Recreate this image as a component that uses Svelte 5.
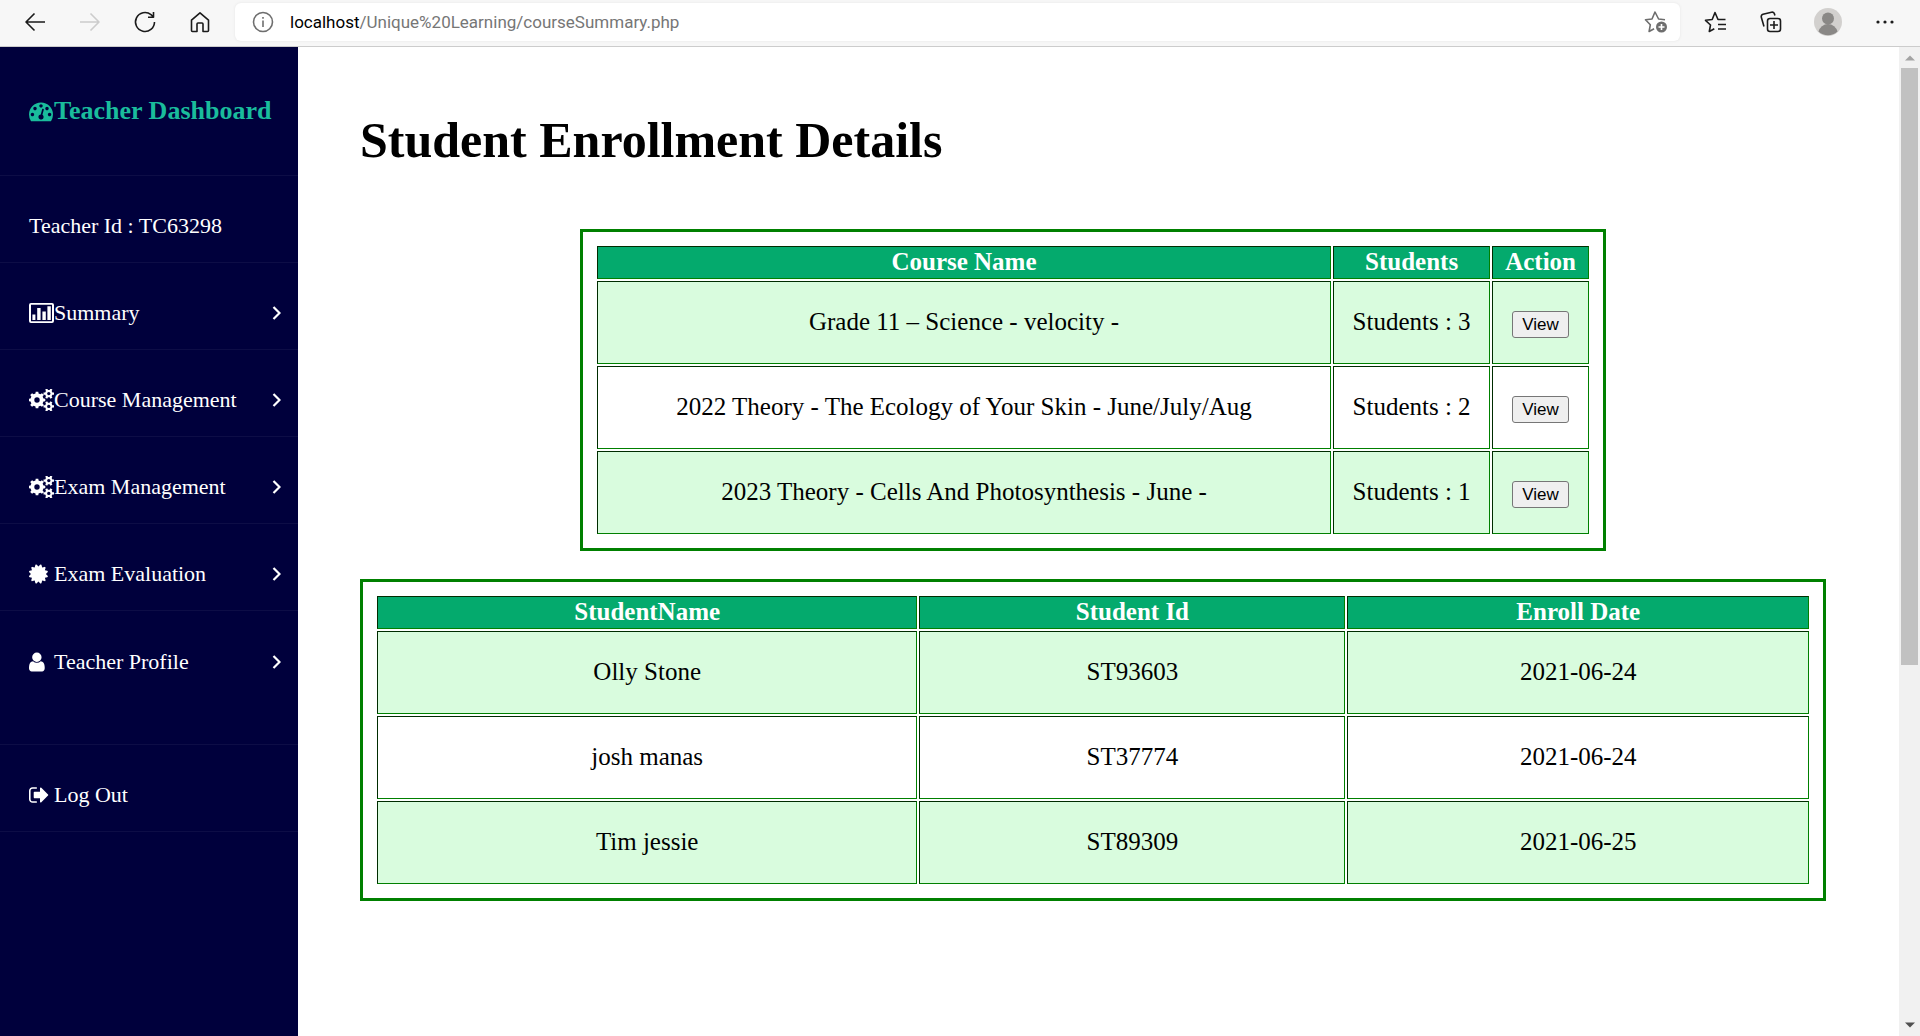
<script>
  // Outline of a toothed wheel with a round hole, centred on (cx, cy).
  function gear(cx, cy, outer, inner, hole, teeth) {
    const step = (Math.PI * 2) / teeth;
    const at = (r, a) => `${(cx + r * Math.cos(a)).toFixed(2)} ${(cy + r * Math.sin(a)).toFixed(2)}`;
    const points = [];
    for (let i = 0; i < teeth; i++) {
      const a = i * step;
      points.push(at(inner, a - step * 0.3), at(outer, a - step * 0.2), at(outer, a + step * 0.2), at(inner, a + step * 0.3));
    }
    return `M${points.join('L')}ZM${cx - hole} ${cy}a${hole} ${hole} 0 1 0 ${hole * 2} 0a${hole} ${hole} 0 1 0 ${-hole * 2} 0Z`;
  }

  const cogs = {
    box: '0 0 25 22',
    path: gear(8, 11, 8.4, 6.6, 2.7, 8) + gear(19.8, 4.6, 5.4, 3.8, 1.7, 6) + gear(19.8, 17.4, 5.4, 3.8, 1.7, 6)
  };

  const icons = {
    chart: {
      box: '0 0 25 22',
      path: 'M2 1h21a2 2 0 0 1 2 2v16a2 2 0 0 1-2 2H2a2 2 0 0 1-2-2V3a2 2 0 0 1 2-2ZM2 2.8v16.4h21V2.800ZM3.400 12.400h3v5.600h-3ZM8.200 6h3.400v12h-3.400ZM13.400 9.400h3.400v8.600h-3.400ZM18.400 4.200h3.400v13.800h-3.400Z'
    },
    cogs,
    certificate: {
      box: '128 0 2036 1792',
      path: 'M1504 896l138 135q30 28 20 70-12 41-52 51l-188 48 53 186q12 41-19 70-29 31-70 19l-186-53-48 188q-10 40-51 52-12 2-19 2-31 0-51-22l-135-138-135 138q-28 30-70 20-41-11-51-52l-48-188-186 53q-41 12-70-19-31-29-19-70l53-186-188-48q-40-10-52-51-10-42 20-70l138-135-138-135q-30-28-20-70 12-41 52-51l188-48-53-186q-12-41 19-70 29-31 70-19l186 53 48-188q10-41 51-51 41-12 70 19l135 139 135-139q29-30 70-19 41 10 51 51l48 188 186-53q41-12 70 19 31 29 19 70l-53 186 188 48q40 10 52 51 10 42-20 70z'
    },
    user: {
      box: '256 0 2036 1792',
      path: 'M1536 1399q0 109-62.5 187t-150.5 78h-854q-88 0-150.5-78t-62.5-187q0-85 8.5-160.5t31.5-152 58.5-131 94-89 134.5-34.5q131 128 313 128t313-128q76 0 134.5 34.5t94 89 58.5 131 31.5 152 8.5 160.5zm-256-887q0 159-112.5 271.5t-271.5 112.5-271.5-112.5-112.5-271.5 112.5-271.5 271.5-112.5 271.5 112.5 112.5 271.5z'
    },
    signout: {
      box: '64 0 2036 1792',
      path: 'M704 1440q0 4 1 20t.5 26.5-3 23.5-10 19.5-20.5 6.5h-320q-119 0-203.5-84.5t-84.5-203.5v-704q0-119 84.5-203.5t203.5-84.5h320q13 0 22.5 9.5t9.5 22.5q0 4 1 20t.5 26.5-3 23.5-10 19.5-20.5 6.5h-320q-66 0-113 47t-47 113v704q0 66 47 113t113 47h312l11.5 1 11.5 3 8 5.5 7 9 2 13.5zm928-544q0 26-19 45l-544 544q-19 19-45 19t-45-19-19-45v-288h-448q-26 0-45-19t-19-45v-384q0-26 19-45t45-19h448v-288q0-26 19-45t45-19 45 19l544 544q19 19 19 45z'
    }
  };

  const menu = [
    { label: 'Summary', icon: 'chart', more: true },
    { label: 'Course Management', icon: 'cogs', more: true },
    { label: 'Exam Management', icon: 'cogs', more: true },
    { label: 'Exam Evaluation', icon: 'certificate', more: true },
    { label: 'Teacher Profile', icon: 'user', more: true, last: true },
    { label: 'Log Out', icon: 'signout', more: false }
  ];

  const courses = [
    { name: 'Grade 11 – Science - velocity -', students: 3 },
    { name: '2022 Theory - The Ecology of Your Skin - June/July/Aug', students: 2 },
    { name: '2023 Theory - Cells And Photosynthesis - June -', students: 1 }
  ];

  const students = [
    { name: 'Olly Stone', id: 'ST93603', date: '2021-06-24' },
    { name: 'josh manas', id: 'ST37774', date: '2021-06-24' },
    { name: 'Tim jessie', id: 'ST89309', date: '2021-06-25' }
  ];
</script>

<div class="window">
  <header class="toolbar">
    <div class="nav-buttons">
      <button aria-label="Back"><svg viewBox="0 0 24 24"><path d="M22 12H3M11.500 3.500 3 12l8.500 8.500" /></svg></button>
      <button aria-label="Forward" class="off" disabled><svg viewBox="0 0 24 24"><path d="M2 12h19M12.500 3.500 21 12l-8.500 8.500" /></svg></button>
      <button aria-label="Refresh"><svg viewBox="0 0 24 24"><path d="M21.500 12a9.500 9.500 0 1 1-3.500-7.400L20.500 7M20.500 2v5.300h-5.500" /></svg></button>
      <button aria-label="Home"><svg viewBox="0 0 24 24"><path d="M3.500 10.200 12 2.800l8.500 7.400V20.500a1 1 0 0 1-1 1h-4.500V14a1 1 0 0 0-1-1h-4a1 1 0 0 0-1 1v7.500H4.500a1 1 0 0 1-1-1Z" /></svg></button>
    </div>
    <div class="address">
      <button aria-label="Site information" class="grey"><svg viewBox="0 0 24 24"><circle cx="12" cy="12" r="9.500" /><path d="M12 10.500v6.500M12 7v1.800" /></svg></button>
      <div class="url"><span>localhost</span>/Unique%20Learning/courseSummary.php</div>
      <button aria-label="Add to favorites" class="grey">
        <svg viewBox="0 0 24 24"><path d="M21 9.800 14.600 9 11 2 8 9 1.500 9.800l4.800 5-1.200 6.700 5-2.700" /><circle class="solid" cx="17.500" cy="17" r="5.500" /><path class="light" d="M17.500 14v6M14.500 17h6" /></svg>
      </button>
    </div>
    <div class="tools">
      <button aria-label="Favorites"><svg viewBox="0 0 24 24"><path d="M21.500 9.500h-7.500L11 2.500 8.200 9.500l-6.700.8 5 4.700-1.200 6.500 5-2.700M14 14.500h8M14 19h8" /></svg></button>
      <button aria-label="Collections"><svg viewBox="0 0 24 24"><rect x="8.500" y="8.500" width="13" height="13" rx="2.500" /><path d="M15 11v8M11 15h8M5 16.500 2.300 7.300A2.500 2.500 0 0 1 4 4.200l8.500-2a2.500 2.500 0 0 1 3 1.800l.4 1.500" /></svg></button>
      <button aria-label="Profile" class="avatar">
        <svg viewBox="0 0 28 28"><circle cx="14" cy="14" r="14" fill="#d2d0ce" /><circle cx="14" cy="10.500" r="6" fill="#8a8886" /><path d="M4.500 23.500a9.800 9.800 0 0 1 19 0A14 14 0 0 1 4.500 23.500Z" fill="#8a8886" /></svg>
      </button>
      <button aria-label="Settings and more"><svg viewBox="0 0 24 24"><g class="dots"><circle cx="5" cy="12" r="1.600" /><circle cx="12" cy="12" r="1.600" /><circle cx="19" cy="12" r="1.600" /></g></svg></button>
    </div>
  </header>

  <div class="page">
    <aside class="sidebar">
      <div class="brand">
        <svg viewBox="0 0 1792 1792"><path d="M384 1152q0-53-37.500-90.500t-90.500-37.500-90.500 37.500-37.500 90.500 37.500 90.500 90.500 37.500 90.500-37.500 37.500-90.500zm192-448q0-53-37.500-90.500t-90.500-37.500-90.500 37.500-37.500 90.500 37.500 90.500 90.500 37.500 90.500-37.500 37.500-90.500zm428 481l101-382q6-26-7.500-48.500t-38.500-29.500-48 6.500-30 39.500l-101 382q-60 5-107 43.500t-63 98.500q-20 77 20 146t117 89 146-20 89-117q16-60-6-117t-72-91zm660-33q0-53-37.500-90.500t-90.500-37.500-90.500 37.500-37.500 90.500 37.500 90.500 90.500 37.500 90.500-37.500 37.500-90.500zm-640-640q0-53-37.500-90.500t-90.500-37.500-90.500 37.500-37.500 90.500 37.500 90.500 90.500 37.500 90.500-37.500 37.500-90.500zm448 192q0-53-37.500-90.500t-90.500-37.500-90.500 37.500-37.500 90.500 37.500 90.500 90.500 37.500 90.500-37.500 37.500-90.500zm320 448q0 261-141 483-19 29-54 29h-1402q-35 0-54-29-141-221-141-483 0-182 71-348t191-286 286-191 348-71 348 71 286 191 191 286 71 348z" /></svg>
        <h2>Teacher Dashboard</h2>
      </div>
      <div class="item">Teacher Id : TC63298</div>
      <nav>
        {#each menu as entry}
          <a class="item" class:last={entry.last} href="#top">
            <svg class="icon" viewBox={icons[entry.icon].box}><path fill-rule="evenodd" d={icons[entry.icon].path} /></svg>
            <span>{entry.label}</span>
            {#if entry.more}
              <svg class="chevron" viewBox="0 0 9 14"><path d="M1.500 1 7.500 7l-6 6" /></svg>
            {/if}
          </a>
        {/each}
      </nav>
    </aside>

    <main>
      <h1>Student Enrollment Details</h1>
      <table class="courses">
        <thead>
          <tr><th>Course Name</th><th class="count">Students</th><th class="action">Action</th></tr>
        </thead>
        <tbody>
          {#each courses as course}
            <tr>
              <td>{course.name}</td>
              <td>Students : {course.students}</td>
              <td class="control"><button class="view">View</button></td>
            </tr>
          {/each}
        </tbody>
      </table>
      <table class="students">
        <thead>
          <tr><th class="name">StudentName</th><th class="id">Student Id</th><th>Enroll Date</th></tr>
        </thead>
        <tbody>
          {#each students as student}
            <tr><td>{student.name}</td><td>{student.id}</td><td>{student.date}</td></tr>
          {/each}
        </tbody>
      </table>
    </main>

    <div class="scrollbar" aria-hidden="true">
      <svg class="up" viewBox="0 0 10 6"><path d="M0 5.500 5 .5l5 5Z" /></svg>
      <div class="track"><div class="thumb"></div></div>
      <svg class="down" viewBox="0 0 10 6"><path d="M0 .5 5 5.500l5-5Z" /></svg>
    </div>
  </div>
</div>

<style>
  :global(body) {
    margin: 0;
    background: #fff;
  }

  .window {
    display: flex;
    flex-direction: column;
    min-height: 100vh;
    font-family: 'Liberation Serif', 'Times New Roman', serif;
    color: #000;
  }

  button {
    font-family: 'Liberation Sans', Arial, sans-serif;
  }

  .toolbar {
    display: flex;
    align-items: center;
    height: 44px;
    padding: 0 23px 2px 0;
    background: #f7f7f7;
    border-bottom: 1px solid #ccc;
  }

  .toolbar button {
    display: flex;
    padding: 0;
    border: 0;
    background: none;
  }

  .toolbar svg {
    width: 24px;
    height: 24px;
    fill: none;
    stroke: #1b1b1b;
    stroke-width: 1.6;
    stroke-linejoin: round;
  }

  .nav-buttons {
    display: flex;
    gap: 31px;
    width: 212px;
    padding-left: 23px;
  }

  .toolbar .off svg {
    stroke: #ccc;
  }

  .address {
    display: flex;
    flex: 1;
    align-items: center;
    height: 38px;
    padding: 0 12px 0 16px;
    box-sizing: border-box;
    border-radius: 6px;
    background: #fff;
    box-shadow: 0 0 3px #e4e4e4;
  }

  .toolbar .grey svg {
    stroke: #6e6e6e;
  }

  .toolbar .grey .solid {
    fill: #6e6e6e;
    stroke: none;
  }

  .toolbar .grey .light {
    stroke: #fff;
  }

  .url {
    flex: 1;
    padding-left: 15px;
    font: 17px/24px Roboto, 'Noto Sans', sans-serif;
    color: #767676;
  }

  .url span {
    color: #000;
  }

  .tools {
    display: flex;
    align-items: center;
    gap: 31px;
    padding-left: 24px;
  }

  .toolbar .avatar svg {
    width: 28px;
    height: 28px;
    stroke: none;
  }

  .toolbar .dots {
    fill: #1b1b1b;
    stroke: none;
  }

  .page {
    display: flex;
    flex: 1;
  }

  .sidebar {
    flex: 0 0 298px;
    background: #00003c;
    color: #fff;
  }

  .brand {
    display: flex;
    align-items: center;
    padding: 49px 16px 49px 29px;
    border-bottom: 1px solid #0d0d46;
    color: #1abc9c;
  }

  .brand svg {
    width: 24px;
    height: 24px;
    margin-right: 1px;
    fill: currentColor;
  }

  h2 {
    margin: 0;
    font-size: 26px;
    line-height: 30px;
    white-space: nowrap;
  }

  .item {
    display: flex;
    align-items: center;
    padding: 37px 17px 24px 29px;
    border-bottom: 1px solid #0d0d46;
    color: #fff;
    font-size: 22px;
    line-height: 25px;
    text-decoration: none;
  }

  .item.last {
    padding: 38px 17px 70px 29px;
  }

  .item span {
    flex: 1;
  }

  .icon {
    width: 25px;
    height: 22px;
    fill: #fff;
  }

  .chevron {
    width: 9px;
    height: 14px;
    fill: none;
    stroke: #fff;
    stroke-width: 2.2;
  }

  main {
    flex: 1;
    padding: 64px 73px 64px 62px;
  }

  h1 {
    margin: 0 0 60px;
    font-size: 50px;
    line-height: 58px;
  }

  table {
    box-sizing: border-box;
    width: 100%;
    padding: 12px;
    border: 3px solid green;
    border-spacing: 2px;
    table-layout: fixed;
    font-size: 25px;
    line-height: 29px;
    text-align: center;
  }

  .courses {
    width: 70%;
    margin: 0 auto 28px;
  }

  .courses .count {
    width: 155px;
  }

  .courses .action {
    width: 95px;
  }

  .students .name {
    width: 37.7%;
  }

  .students .id {
    width: 29.7%;
  }

  th {
    padding: 0 0 2px;
    border: 1px inset green;
    background: #04aa6d;
    color: #fff;
  }

  td {
    padding: 25px 0 27px;
    border: 1px inset green;
  }

  td.control {
    padding: 25px 0;
  }

  tbody tr:nth-child(odd) td {
    background: #d9fcde;
  }

  .view {
    padding: 3px 9px;
    border: 1px solid #767676;
    border-radius: 3px;
    background: #efefef;
    color: #000;
    font-size: 17px;
    line-height: 19px;
  }

  .scrollbar {
    display: flex;
    flex: 0 0 21px;
    flex-direction: column;
    align-items: center;
    padding: 8px 0;
    box-sizing: border-box;
    background: #f1f1f1;
  }

  .scrollbar svg {
    width: 10px;
    height: 6px;
  }

  .up {
    fill: #a3a3a3;
  }

  .down {
    fill: #505050;
  }

  .track {
    flex: 1;
    padding: 7px 0;
  }

  .thumb {
    width: 17px;
    height: 63%;
    background: #c1c1c1;
  }
</style>
